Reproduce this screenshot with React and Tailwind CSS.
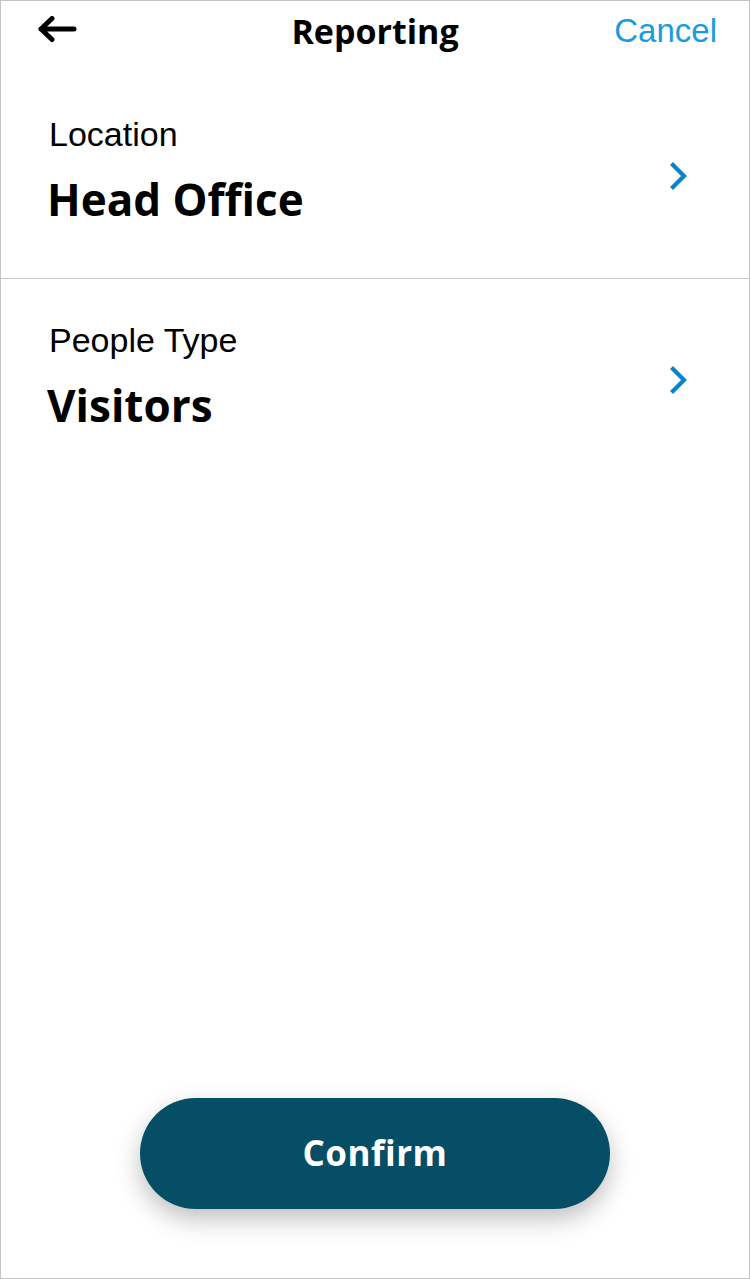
import React from "react";

const Chevron = () => (
  <svg width="20" height="28" viewBox="0 0 20 28" className="block">
    <path d="M4 3 L15 14 L4 25" fill="none" stroke="#0a84c9" strokeWidth="4.2" strokeLinecap="square" strokeLinejoin="miter" />
  </svg>
);

const Row = ({ label, value }) => (
  <div className="flex flex-col pl-[48px]">
    <span className="text-[34px] leading-[40px] text-black" style={{ fontFamily: '"Liberation Sans", Arial, sans-serif' }}>
      {label}
    </span>
    <span className="mt-[18px] -ml-[2px] text-[44px] leading-[54px] font-bold text-black" style={{ fontFamily: '"Open Sans", sans-serif' }}>
      {value}
    </span>
  </div>
);

export default function App() {
  return (
    <div className="w-[750px] h-[1279px] box-border border border-[#c4c4c4] bg-white flex flex-col" style={{ fontFamily: '"Open Sans", sans-serif' }}>
      {/* header */}
      <div className="h-[72px] pb-[12px] px-[36px] flex items-center justify-between relative">
        <svg width="40" height="30" viewBox="0 0 40 30">
          <path d="M4 13 H37 M15 2.5 L4 13 L15 23.5" fill="none" stroke="#000" strokeWidth="5" strokeLinecap="round" strokeLinejoin="round" />
        </svg>
        <span className="absolute left-0 right-0 top-0 h-[60px] flex items-center justify-center pointer-events-none text-[34px] font-bold text-black">
          Reporting
        </span>
        <span className="text-[33px] text-[#1a9be0] -mr-[4px]" style={{ fontFamily: '"Liberation Sans", Arial, sans-serif' }}>
          Cancel
        </span>
      </div>

      {/* location */}
      <div className="h-[206px] pt-[41px] border-b border-[#c8c8c8] flex items-start justify-between pr-[60px]">
        <Row label="Location" value="Head Office" />
        <div className="mt-[48px]">
          <Chevron />
        </div>
      </div>

      {/* people type */}
      <div className="pt-[41px] flex items-start justify-between pr-[60px]">
        <Row label="People Type" value="Visitors" />
        <div className="mt-[46px]">
          <Chevron />
        </div>
      </div>

      <div className="flex-1" />

      <div className="flex justify-center pb-[69px]">
        <button className="w-[470px] h-[111px] rounded-full bg-[#054e66] text-white text-[35px] font-bold tracking-[0.5px] shadow-[0_10px_24px_rgba(0,0,0,0.25)]">
          Confirm
        </button>
      </div>
    </div>
  );
}
